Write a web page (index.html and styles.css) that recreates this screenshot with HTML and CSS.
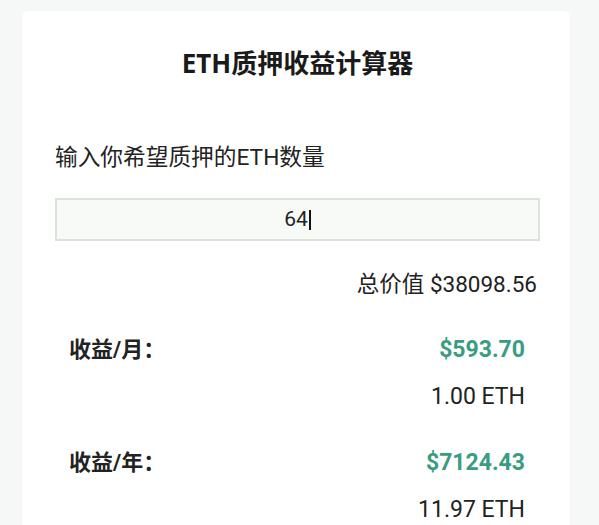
FILE: index.html
```html
<!DOCTYPE html>
<html lang="zh">

<head>
  <meta charset="UTF-8">
  <title>ETH质押收益计算器</title>
  <meta name="viewport" content="width=device-width, initial-scale=1.0">
  <link rel="stylesheet" href="styles.css">
</head>

<body>
  <div class="card">
    <h2 class="title">ETH质押收益计算器</h2>

    <p class="label">输入你希望质押的ETH数量</p>
    <div class="input">64<span class="caret"></span></div>

    <p class="total">总价值 $38098.56</p>

    <div class="row">
      <span class="row-name">收益/月：</span>
      <span class="row-usd">$593.70</span>
    </div>
    <p class="row-eth">1.00 ETH</p>

    <div class="row">
      <span class="row-name">收益/年：</span>
      <span class="row-usd">$7124.43</span>
    </div>
    <p class="row-eth">11.97 ETH</p>
  </div>
</body>

</html>
```

FILE: styles.css
```css
* {
  margin: 0;
  padding: 0;
  box-sizing: border-box;
}

body {
  background: #f6f8f7;
  font-family: Roboto, "Noto Sans CJK SC", sans-serif;
  color: #222;
  padding: 11px 29px 0 22px;
  height: 525px;
  overflow: hidden;
}

.card {
  background: #fff;
  border-radius: 6px;
  padding: 36px 30px 40px 33px;
  min-height: 600px;
}

.title {
  font-family: "Noto Sans", "Noto Sans CJK SC", sans-serif;
  font-size: 26px;
  line-height: 32px;
  font-weight: 700;
  text-align: center;
  color: #1a1a1a;
}

.label {
  margin-top: 66px;
  font-size: 22.7px;
  line-height: 26px;
}

.input {
  margin-top: 27px;
  height: 43px;
  border: 2px solid #dbe3db;
  background: #f7faf7;
  text-align: center;
  font-size: 21px;
  line-height: 39px;
}

.caret {
  display: inline-block;
  width: 2px;
  height: 20px;
  margin-left: 1px;
  background: #111;
  vertical-align: -4px;
}

.total {
  margin-top: 29px;
  font-size: 22.5px;
  line-height: 28px;
  text-align: right;
  padding-right: 3px;
}

.row {
  display: flex;
  justify-content: space-between;
  align-items: center;
  margin-top: 36px;
  padding: 0 15px 0 14px;
  line-height: 32px;
}

.row-name {
  font-size: 22px;
  font-weight: 700;
}

.row-usd {
  font-size: 23px;
  font-weight: 700;
  color: #3a9c80;
}

.row-eth {
  margin-top: 17px;
  padding-right: 15px;
  font-size: 23px;
  line-height: 28px;
  text-align: right;
}
```
